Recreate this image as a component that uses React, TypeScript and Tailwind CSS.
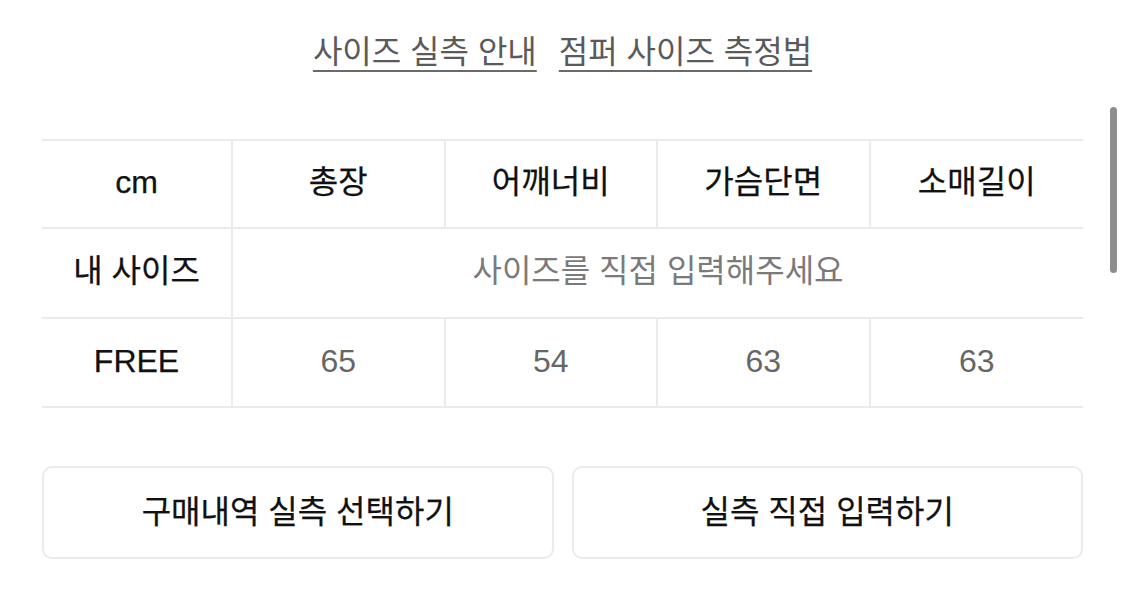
const FONT = "font-['Liberation_Sans','Noto_Sans_CJK_KR',sans-serif]";
const DARK = "text-[#111] [-webkit-text-stroke:0.25px_#111]";

const headers = ["총장", "어깨너비", "가슴단면", "소매길이"];
const free = ["65", "54", "63", "63"];

export default function App() {
  return (
    <div className={`relative w-[1125px] h-[612px] bg-white overflow-hidden ${FONT}`}>
      {/* top links */}
      <div className="h-[104px] flex items-center justify-center gap-[22px] text-[32px] leading-none text-[#5a5a5a]">
        <span className="underline decoration-2 underline-offset-[7px] decoration-[#6a6a6a]">사이즈 실측 안내</span>
        <span className="underline decoration-2 underline-offset-[7px] decoration-[#6a6a6a]">점퍼 사이즈 측정법</span>
      </div>

      {/* size table */}
      <div className="mx-[42px] mt-[35px] border-t-2 border-[#ebebeb] grid grid-cols-[191px_repeat(4,1fr)] text-[32px] leading-none">
        <div className={`h-[88px] pb-[4px] flex items-center justify-center border-b-2 border-r-2 border-[#ebebeb] ${DARK}`}>cm</div>
        {headers.map((h, i) => (
          <div
            key={h}
            className={`h-[88px] pb-[4px] flex items-center justify-center border-b-2 border-[#ebebeb] ${DARK} ${i < 3 ? "border-r-2" : ""}`}
          >
            {h}
          </div>
        ))}

        <div className={`h-[90px] pb-[4px] flex items-center justify-center border-b-2 border-r-2 border-[#ebebeb] ${DARK}`}>내 사이즈</div>
        <div className="col-span-4 h-[90px] pb-[4px] flex items-center justify-center border-b-2 border-[#ebebeb] text-[#7a7a7a]">
          사이즈를 직접 입력해주세요
        </div>

        <div className={`h-[89px] pb-[4px] flex items-center justify-center border-b-2 border-r-2 border-[#ebebeb] ${DARK}`}>FREE</div>
        {free.map((v, i) => (
          <div
            key={i}
            className={`h-[89px] pb-[4px] flex items-center justify-center border-b-2 border-[#ebebeb] text-[#666] ${i < 3 ? "border-r-2" : ""}`}
          >
            {v}
          </div>
        ))}
      </div>

      {/* buttons */}
      <div className="mx-[42px] mt-[58px] flex gap-[18px]">
        <button className={`flex-1 h-[93px] pb-[2px] rounded-[10px] border-2 border-[#ebebeb] bg-white text-[32px] ${DARK} flex items-center justify-center`}>
          구매내역 실측 선택하기
        </button>
        <button className={`flex-1 h-[93px] pb-[2px] rounded-[10px] border-2 border-[#ebebeb] bg-white text-[32px] ${DARK} flex items-center justify-center`}>
          실측 직접 입력하기
        </button>
      </div>

      {/* overlay scrollbar */}
      <div className="absolute left-[1110px] top-[107px] w-[7px] h-[166px] rounded-full bg-[#8e8e8e]" />
    </div>
  );
}
